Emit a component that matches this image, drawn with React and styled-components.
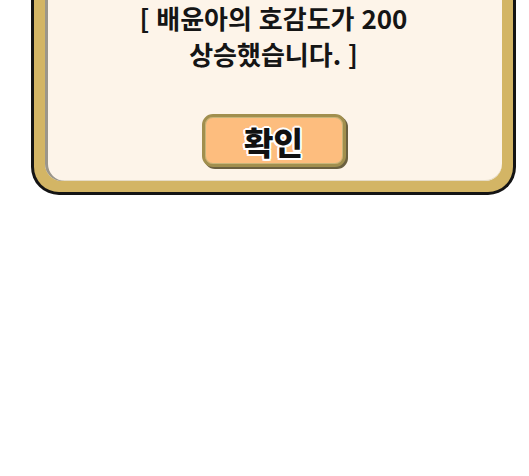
import React from 'react';
import styled, { createGlobalStyle } from 'styled-components';

const Global = createGlobalStyle`
  html, body {
    margin: 0;
    padding: 0;
    background: #ffffff;
  }
  body {
    font-family: 'Noto Sans CJK KR', 'Noto Sans', sans-serif;
  }
`;

const Page = styled.div`
  width: 529px;
  height: 476px;
  background: #fff;
  overflow: hidden;
`;

const Frame = styled.div`
  box-sizing: border-box;
  margin-left: 31px;
  width: 485px;
  background: #d3b565;
  border: 3px solid #141414;
  border-top: none;
  border-radius: 0 0 28px 28px;
  padding: 0 11px 11px 11px;
`;

const Panel = styled.div`
  background: #fdf4e9;
  border-radius: 0 0 17px 17px;
  box-shadow: inset 3px 0 0 #9b968b, inset 0 -1px 0 #e6dcc6;
  display: flex;
  flex-direction: column;
  align-items: center;
  padding: 0 0 14px 0;
`;

const Message = styled.p`
  margin: 0;
  font-size: 26px;
  font-weight: 700;
  line-height: 36px;
  color: #151515;
  text-align: center;
  word-spacing: 1px;
`;

const Confirm = styled.button`
  box-sizing: border-box;
  margin-top: 42px;
  width: 144px;
  height: 53px;
  border: 3px solid #a18f4e;
  border-radius: 11px;
  background: #fdbd7e;
  box-shadow: inset 0 0 0 1px #c7b57a, 2px 2px 0 #6b6040;
  font-family: 'Noto Sans CJK KR', sans-serif;
  font-size: 32px;
  font-weight: 900;
  color: #111;
  padding: 0;
  line-height: 1;
  text-shadow:
    2px 0 0 #fff, -2px 0 0 #fff, 0 2px 0 #fff, 0 -2px 0 #fff,
    1.5px 1.5px 0 #fff, -1.5px 1.5px 0 #fff, 1.5px -1.5px 0 #fff, -1.5px -1.5px 0 #fff;
  cursor: pointer;
`;

export default function App() {
  return (
    <Page>
      <Global />
      <Frame>
        <Panel>
          <Message>
            [ 배윤아의 호감도가 200
            <br />
            상승했습니다. ]
          </Message>
          <Confirm type="button">확인</Confirm>
        </Panel>
      </Frame>
    </Page>
  );
}
